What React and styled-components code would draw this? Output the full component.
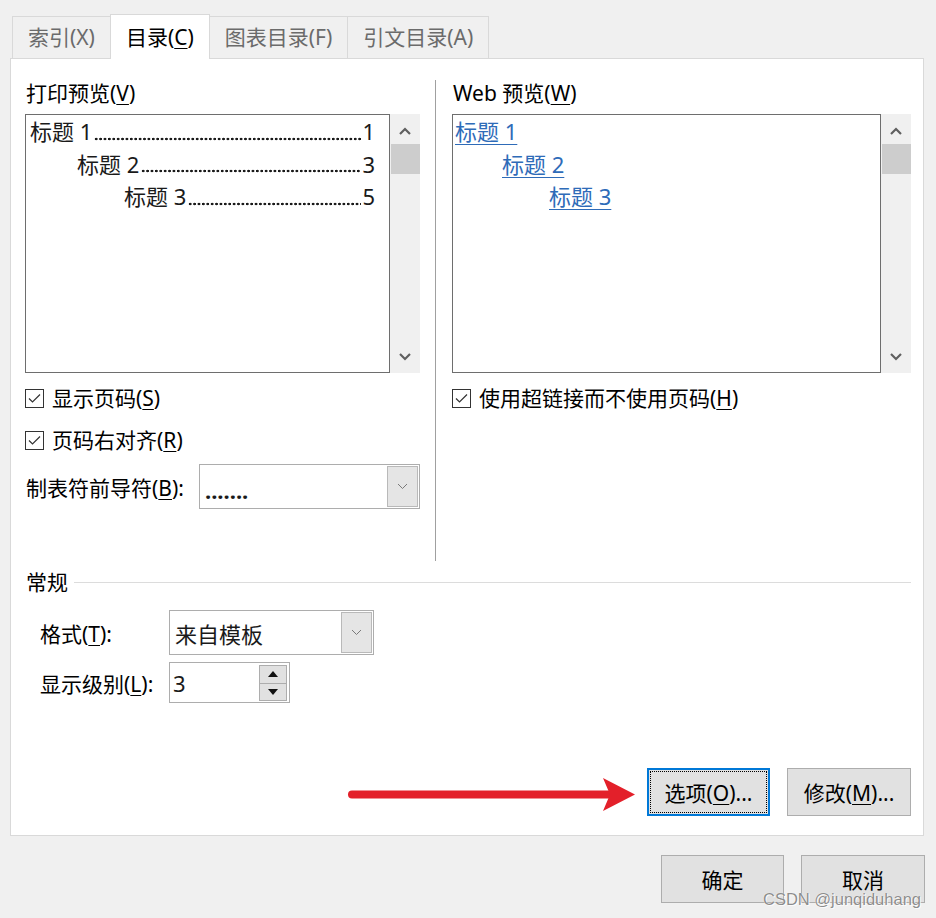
import React from 'react';
import styled, { createGlobalStyle } from 'styled-components';

const FONT = `"Noto Sans", "Noto Sans CJK SC", sans-serif`;

const Global = createGlobalStyle`
  html, body { margin: 0; padding: 0; background: #f0f0f0; }
  body { font-family: ${FONT}; }
  * { box-sizing: border-box; }
`;

const Page = styled.div`
  position: relative;
  width: 936px;
  height: 918px;
  padding: 14px 11px 0 10px;
  background: #f0f0f0;
  font-family: ${FONT};
  font-size: 21px;
  color: #000;
  overflow: hidden;
`;

const TabBar = styled.div`
  position: relative;
  z-index: 1;
  display: flex;
  align-items: flex-end;
  height: 44px;
  padding-left: 2px;
`;

const Tab = styled.div`
  height: ${(p) => (p.$active ? '45px' : '42px')};
  margin-bottom: ${(p) => (p.$active ? '-1px' : '0')};
  padding: ${(p) => (p.$active ? '6px 15px 0' : '4px 15px 0')};
  line-height: 32px;
  white-space: nowrap;
  background: ${(p) => (p.$active ? '#fff' : '#f0f0f0')};
  border: 1px solid #d9d9d9;
  border-bottom: none;
  color: ${(p) => (p.$active ? '#000' : '#6b6b6b')};
  & + & { margin-left: -1px; }
`;

const Panel = styled.div`
  width: 914px;
  height: 778px;
  background: #fff;
  border: 1px solid #d9d9d9;
  padding: 20px 12px 19px 14px;
  display: flex;
  flex-direction: column;
`;

const Columns = styled.div`
  display: flex;
  align-items: flex-start;
`;

const Column = styled.div`
  width: ${(p) => p.$width}px;
  display: flex;
  flex-direction: column;
`;

const Divider = styled.div`
  width: 1px;
  height: 481px;
  margin: 1px 16px 0 15px;
  background: #a0a0a0;
`;

const FieldLabel = styled.div`
  height: 28px;
  line-height: 28px;
  margin: 0 0 7px 1px;
  white-space: nowrap;
`;

const Key = styled.span`
  text-decoration: underline;
  text-underline-offset: 3px;
  text-decoration-thickness: 1px;
`;

const PreviewBox = styled.div`
  display: flex;
  height: 259px;
`;

const PreviewList = styled.div`
  flex: 1;
  border: 1px solid #6e6e6e;
  padding: 0 14px 0 ${(p) => p.$padLeft}px;
  font-size: 22px;
  line-height: 32.5px;
  color: #1a1a1a;
`;

const TocRow = styled.div`
  display: flex;
  padding-left: ${(p) => p.$level * 47}px;
  white-space: nowrap;
`;

const Leader = styled.span`
  flex: 1;
  margin: 0 1px 0 2px;
  background-image: radial-gradient(circle, #1a1a1a 1.1px, transparent 1.6px);
  background-size: 4.4px 4px;
  background-repeat: repeat-x;
  background-position: left 0 top 21.5px;
`;

const LinkRow = styled.div`
  padding-left: ${(p) => p.$level * 47}px;
  white-space: nowrap;
`;

const TocLink = styled.a`
  color: #2e6bb8;
  text-decoration: underline;
  text-underline-offset: 4px;
  text-decoration-thickness: 1px;
`;

const ScrollTrack = styled.div`
  width: 30px;
  background: #f0f0f0;
  display: flex;
  flex-direction: column;
`;

const ScrollButton = styled.div`
  height: 30px;
  display: flex;
  align-items: center;
  justify-content: center;
  padding-top: ${(p) => (p.$down ? '0' : '3px')};
  padding-bottom: ${(p) => (p.$down ? '3px' : '0')};
`;

const ScrollThumb = styled.div`
  height: 30px;
  margin-left: 1px;
  background: #cdcdcd;
`;

const ScrollFill = styled.div`
  flex: 1;
`;

const CheckRow = styled.div`
  display: flex;
  align-items: center;
  gap: 8px;
  height: 30px;
  margin-top: ${(p) => p.$top}px;
  white-space: nowrap;
`;

const CheckBox = styled.div`
  width: 19px;
  height: 19px;
  border: 1px solid #333;
  background: #fff;
  display: flex;
  align-items: center;
  justify-content: center;
`;

const CheckText = styled.span`
  margin-top: -3px;
`;

const LeaderRow = styled.div`
  display: flex;
  align-items: center;
  margin-top: 9px;
  padding-left: 1px;
  white-space: nowrap;
`;

const Select = styled.div`
  width: ${(p) => p.$width}px;
  height: ${(p) => p.$height}px;
  margin-left: ${(p) => (p.$push ? 'auto' : '0')};
  border: 1px solid #adadad;
  background: #fff;
  padding: 1px;
  display: flex;
`;

const SelectValue = styled.div`
  flex: 1;
  display: flex;
  align-items: center;
  padding-left: 4px;
  font-size: 22px;
  font-weight: ${(p) => (p.$bold ? 700 : 400)};
  padding-top: ${(p) => (p.$bold ? '6px' : '0')};
  color: #1a1a1a;
`;

const DropButton = styled.div`
  width: 31px;
  background: #e5e5e5;
  border: 1px solid #b9b9b9;
  display: flex;
  align-items: center;
  justify-content: center;
`;

const GroupHeader = styled.div`
  display: flex;
  align-items: center;
  margin-top: 7px;
  height: 28px;
  line-height: 28px;
  padding-left: 1px;
`;

const GroupLine = styled.div`
  flex: 1;
  height: 1px;
  margin-left: 6px;
  background: #dcdcdc;
`;

const FieldGrid = styled.div`
  display: grid;
  grid-template-columns: 129px auto;
  row-gap: 7px;
  align-items: center;
  justify-items: start;
  margin-top: 14px;
  padding-left: 15px;
  white-space: nowrap;
`;

const Spinner = styled.div`
  width: 121px;
  height: 41px;
  border: 1px solid #adadad;
  background: #fff;
  padding: 2px 2px 1px 3px;
  display: flex;
`;

const SpinValue = styled.div`
  flex: 1;
  display: flex;
  align-items: center;
  font-size: 22px;
  color: #1a1a1a;
`;

const SpinButtons = styled.div`
  width: 28px;
  display: flex;
  flex-direction: column;
`;

const SpinButton = styled.div`
  flex: 1;
  background: #e1e1e1;
  border: 1px solid #adadad;
  display: flex;
  align-items: center;
  justify-content: center;
  & + & { margin-top: -1px; }
`;

const ButtonRow = styled.div`
  margin-top: auto;
  display: flex;
  justify-content: flex-end;
  align-items: center;
`;

const Arrow = styled.svg`
  display: block;
  margin-right: 6px;
`;

const Button = styled.button`
  width: ${(p) => p.$width || 123}px;
  height: 48px;
  padding: 0;
  font-family: ${FONT};
  font-size: 21px;
  color: #000;
  background: #e1e1e1;
  border: ${(p) => (p.$focused ? '2px solid #0078d7' : '1px solid #adadad')};
  outline: ${(p) => (p.$focused ? '1px dotted #000' : 'none')};
  outline-offset: -4px;
  & + & { margin-left: 17px; }
`;

const DialogButtons = styled.div`
  display: flex;
  justify-content: flex-end;
  margin-top: 19px;
`;

const Watermark = styled.div`
  position: absolute;
  right: 15px;
  bottom: 8px;
  font-family: "Liberation Sans", Arial, sans-serif;
  font-size: 16.5px;
  line-height: 22px;
  color: rgba(120, 120, 120, 0.85);
  text-shadow: 0 0 1px #fff, 1px 1px 0 rgba(255, 255, 255, 0.8);
  pointer-events: none;
`;

const ChevronUp = () => (
  <svg width="12" height="8" viewBox="0 0 12 8">
    <polyline points="1,7 6,2 11,7" fill="none" stroke="#606060" strokeWidth="2.2" />
  </svg>
);

const ChevronDown = () => (
  <svg width="12" height="8" viewBox="0 0 12 8">
    <polyline points="1,1 6,6 11,1" fill="none" stroke="#606060" strokeWidth="2.2" />
  </svg>
);

const SmallChevron = () => (
  <svg width="11" height="7" viewBox="0 0 11 7">
    <polyline points="1,1 5.5,5.5 10,1" fill="none" stroke="#7a7a7a" strokeWidth="1" />
  </svg>
);

const Tri = ({ down }) => (
  <svg width="10" height="6" viewBox="0 0 10 6">
    <polygon points={down ? '0,0 10,0 5,6' : '0,6 10,6 5,0'} fill="#111" />
  </svg>
);

const Check = () => (
  <svg width="17" height="17" viewBox="0 0 17 17">
    <polyline points="3,8.5 6.5,12 14,4.5" fill="none" stroke="#333" strokeWidth="1.2" />
  </svg>
);

const Scrollbar = () => (
  <ScrollTrack>
    <ScrollButton><ChevronUp /></ScrollButton>
    <ScrollThumb />
    <ScrollFill />
    <ScrollButton $down><ChevronDown /></ScrollButton>
  </ScrollTrack>
);

const Checkbox = ({ top, children }) => (
  <CheckRow $top={top}>
    <CheckBox><Check /></CheckBox>
    <CheckText>{children}</CheckText>
  </CheckRow>
);

const tocItems = [
  { level: 0, title: '标题 1', page: '1' },
  { level: 1, title: '标题 2', page: '3' },
  { level: 2, title: '标题 3', page: '5' },
];

export default function App() {
  return (
    <Page>
      <Global />
      <TabBar>
        <Tab>索引(X)</Tab>
        <Tab $active>目录(<Key>C</Key>)</Tab>
        <Tab>图表目录(F)</Tab>
        <Tab>引文目录(A)</Tab>
      </TabBar>
      <Panel>
        <Columns>
          <Column $width={395}>
            <FieldLabel>打印预览(<Key>V</Key>)</FieldLabel>
            <PreviewBox>
              <PreviewList $padLeft={4}>
                {tocItems.map((t) => (
                  <TocRow key={t.title} $level={t.level}>
                    <span>{t.title}</span>
                    <Leader />
                    <span>{t.page}</span>
                  </TocRow>
                ))}
              </PreviewList>
              <Scrollbar />
            </PreviewBox>
            <Checkbox top={10}>显示页码(<Key>S</Key>)</Checkbox>
            <Checkbox top={12}>页码右对齐(<Key>R</Key>)</Checkbox>
            <LeaderRow>
              <span>制表符前导符(<Key>B</Key>):</span>
              <Select $width={221} $height={45} $push>
                <SelectValue $bold>.......</SelectValue>
                <DropButton><SmallChevron /></DropButton>
              </Select>
            </LeaderRow>
          </Column>
          <Divider />
          <Column $width={459}>
            <FieldLabel>Web 预览(<Key>W</Key>)</FieldLabel>
            <PreviewBox>
              <PreviewList $padLeft={2}>
                {tocItems.map((t) => (
                  <LinkRow key={t.title} $level={t.level}>
                    <TocLink href="#">{t.title}</TocLink>
                  </LinkRow>
                ))}
              </PreviewList>
              <Scrollbar />
            </PreviewBox>
            <Checkbox top={10}>使用超链接而不使用页码(<Key>H</Key>)</Checkbox>
          </Column>
        </Columns>

        <GroupHeader>
          <span>常规</span>
          <GroupLine />
        </GroupHeader>
        <FieldGrid>
          <span>格式(<Key>T</Key>):</span>
          <Select $width={205} $height={45}>
            <SelectValue>来自模板</SelectValue>
            <DropButton><SmallChevron /></DropButton>
          </Select>
          <span>显示级别(<Key>L</Key>):</span>
          <Spinner>
            <SpinValue>3</SpinValue>
            <SpinButtons>
              <SpinButton><Tri /></SpinButton>
              <SpinButton><Tri down /></SpinButton>
            </SpinButtons>
          </Spinner>
        </FieldGrid>

        <ButtonRow>
          <Arrow width="294" height="40" viewBox="0 0 294 40">
            <line x1="5" y1="22.5" x2="264" y2="22.5" stroke="#e3202a" strokeWidth="8" strokeLinecap="round" />
            <polygon points="256,6 288,22.5 256,39 263,22.5" fill="#e3202a" />
          </Arrow>
          <Button $focused>选项(<Key>O</Key>)...</Button>
          <Button $width={124}>修改(<Key>M</Key>)...</Button>
        </ButtonRow>
      </Panel>
      <DialogButtons>
        <Button>确定</Button>
        <Button $width={124}>取消</Button>
      </DialogButtons>
      <Watermark>CSDN @junqiduhang</Watermark>
    </Page>
  );
}
